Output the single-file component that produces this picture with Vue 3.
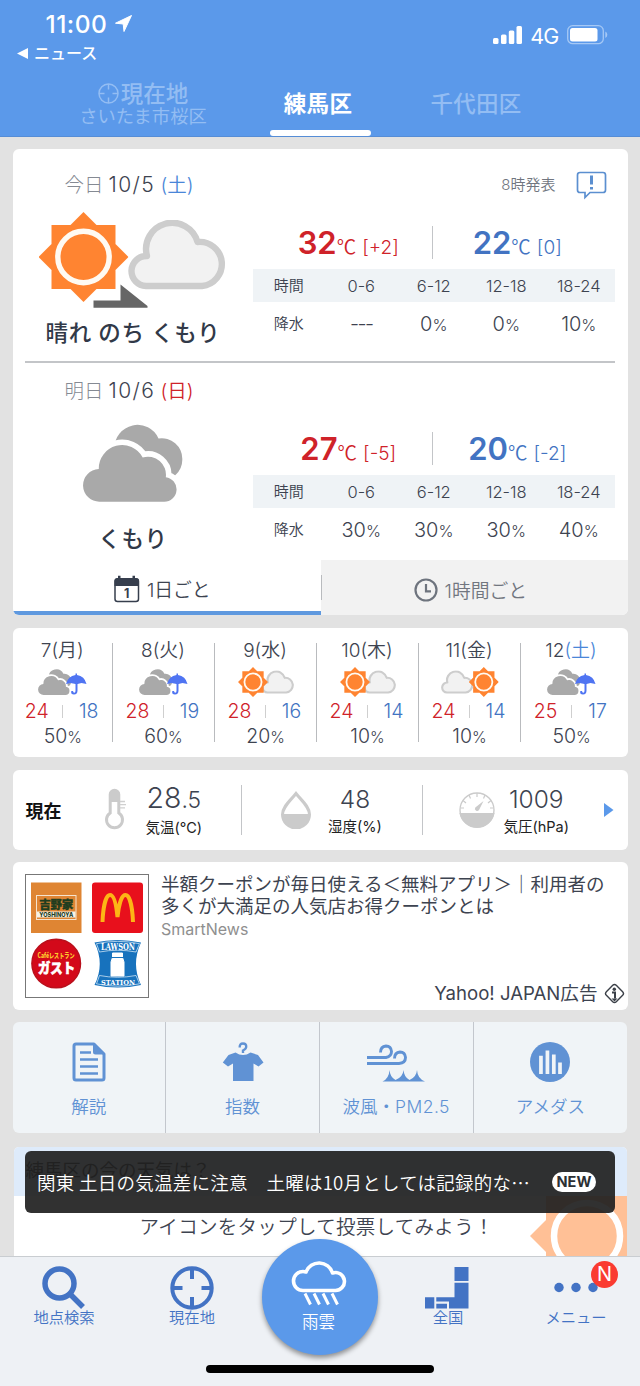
<script setup>
const days = [
  {
    label: '今日', date: '10/5', dow: '(土)', dowClass: 'sat', weather: '晴れ のち くもり', icon: 'sunny',
    hi: 32, hiDiff: '[+2]', lo: 22, loDiff: '[0]', issued: '8時発表',
    rain: ['---', '0', '0', '10'],
  },
  {
    label: '明日', date: '10/6', dow: '(日)', dowClass: 'sun', weather: 'くもり', icon: 'cloudy',
    hi: 27, hiDiff: '[-5]', lo: 20, loDiff: '[-2]', issued: '',
    rain: ['30', '30', '30', '40'],
  },
]
const hours = ['0-6', '6-12', '12-18', '18-24']
const week = [
  { d: 7, w: '(月)', icon: 'rain', hi: 24, lo: 18, p: 50 },
  { d: 8, w: '(火)', icon: 'rain', hi: 28, lo: 19, p: 60 },
  { d: 9, w: '(水)', icon: 'suncloud', hi: 28, lo: 16, p: 20 },
  { d: 10, w: '(木)', icon: 'suncloud', hi: 24, lo: 14, p: 10 },
  { d: 11, w: '(金)', icon: 'cloudsun', hi: 24, lo: 14, p: 10 },
  { d: 12, w: '(土)', icon: 'rain', hi: 25, lo: 17, p: 50, sat: true },
]
</script>

<template>
  <div class="screen">
    <svg class="defs" width="0" height="0">
      <symbol id="i-sun" viewBox="-45 -45 90 90">
        <path d="M-32-32H32V32H-32Z M0-45L45 0L0 45L-45 0Z" fill="#ff8431" />
        <circle r="25.7" fill="none" stroke="#fffaf2" stroke-width="5.4" />
      </symbol>
      <symbol id="i-cloud" viewBox="127 220 101 72">
        <path d="M146 286A15 15 0 0 1 147 256A26 26 0 0 1 197.5 242A22 22 0 0 1 202 286Z" fill="#f2f2f2" stroke="#cdcdcd" stroke-width="6.4" stroke-linejoin="round" />
      </symbol>
      <symbol id="i-dark" viewBox="82 424 101 79">
        <g fill="#a9a9a9">
          <path d="M113.500 448A23 23 0 0 1 157.500 438.500A20.500 20.500 0 0 1 181.300 459A21 21 0 0 1 174 475.500L140 480Z" />
          <path d="M99 501.700A16.300 16.300 0 0 1 97.800 469A23.300 23.300 0 0 1 141.700 457.500A18 18 0 0 1 164.800 477.200A12.300 12.300 0 0 1 163 501.700Z" stroke="#fff" stroke-width="11" />
          <path d="M99 501.700A16.300 16.300 0 0 1 97.800 469A23.300 23.300 0 0 1 141.700 457.500A18 18 0 0 1 164.800 477.200A12.300 12.300 0 0 1 163 501.700Z" />
        </g>
      </symbol>
    </svg>

    <header class="header">
      <div class="status">
        <div class="clock">
          <span>11:00</span>
          <svg width="17" height="17" viewBox="0 0 17 17"><path d="M16.500.5L.5 8.200L8.200 9L9 16.500Z" fill="#fff" stroke="#fff" stroke-linejoin="round" /></svg>
        </div>
        <div class="signal">
          <svg width="29" height="18" viewBox="0 0 29 18" fill="#fff"><rect y="12" width="5.500" height="6" rx="1.500" /><rect x="8" y="8.500" width="5.500" height="9.500" rx="1.500" /><rect x="15.800" y="4.500" width="5.500" height="13.500" rx="1.500" /><rect x="23.500" width="5.500" height="18" rx="1.500" /></svg>
          <span>4G</span>
          <svg width="41" height="20" viewBox="0 0 41 20"><rect x=".7" y=".7" width="35.600" height="18" rx="5" fill="none" stroke="#a5c8f5" stroke-width="1.300" /><rect x="3" y="3" width="27.500" height="13.400" rx="2.500" fill="#fff" /><path d="M38.300 6.500Q40.300 7.500 40.300 9.700T38.300 13Z" fill="#a5c8f5" /></svg>
        </div>
      </div>
      <div class="back">
        <svg width="11" height="11" viewBox="0 0 11 11"><path d="M0 5.500L11 0V11Z" fill="#fff" /></svg>
        <span>ニュース</span>
      </div>
      <nav class="places">
        <div class="place here">
          <div class="here-name">
            <svg width="21" height="21" viewBox="0 0 21 21" fill="none" stroke="#93bdf3" stroke-width="1.500"><circle cx="10.500" cy="10.500" r="9.500" /><path d="M10.500 1V6.500M10.500 14.500V20M1 10.500H6.500M14.500 10.500H20" /></svg>
            <span>現在地</span>
          </div>
          <div class="here-sub">さいたま市桜区</div>
        </div>
        <div class="place active"><span>練馬区</span></div>
        <div class="place other">千代田区</div>
      </nav>
    </header>

    <main class="content">
      <section class="card forecast">
        <article v-for="day in days" :key="day.label" class="day" :class="day.icon">
          <div class="day-head">
            <span class="muted">{{ day.label }}</span>
            <span class="date">{{ day.date }}</span>
            <span class="dow" :class="day.dowClass">{{ day.dow }}</span>
            <template v-if="day.issued">
              <span class="issued">{{ day.issued }}</span>
              <svg class="alert" width="31" height="29" viewBox="0 0 31 29" fill="none" stroke="#5b8fd0"><path d="M4 1.500H27Q29.500 1.500 29.500 4V19Q29.500 21.500 27 21.500H14L9 26.500V21.500H4Q1.500 21.500 1.500 19V4Q1.500 1.500 4 1.500Z" stroke-width="1.700" /><path d="M15.500 4.500V13.500M15.500 16V18.500" stroke-width="3" /></svg>
            </template>
          </div>
          <div class="day-left">
            <svg v-if="day.icon === 'sunny'" width="188" height="96" viewBox="39 212 188 96">
              <use href="#i-sun" x="38.500" y="212" width="90" height="90" />
              <use href="#i-cloud" x="127" y="220" width="101" height="72" />
              <path d="M93.500 300.500H120.500V284.500L147.500 306V307.700H93.500Z" fill="#666" />
            </svg>
            <svg v-else width="101" height="96" viewBox="82 418 101 96">
              <use href="#i-dark" x="82" y="424" width="101" height="79" />
            </svg>
            <div class="weather">{{ day.weather }}</div>
          </div>
          <div class="day-right">
            <div class="temps">
              <div class="temp hi"><b>{{ day.hi }}</b><i>℃</i><span>{{ day.hiDiff }}</span></div>
              <div class="temp lo"><b>{{ day.lo }}</b><i>℃</i><span>{{ day.loDiff }}</span></div>
            </div>
            <div class="row row-head"><span class="th">時間</span><span v-for="h in hours" :key="h">{{ h }}</span></div>
            <div class="row row-rain">
              <span class="th">降水</span>
              <span v-for="(r, i) in day.rain" :key="i" :class="{ none: r === '---' }">{{ r }}<small v-if="r !== '---'">%</small></span>
            </div>
          </div>
        </article>
        <div class="modes">
          <div class="mode on">
            <svg width="26" height="28" viewBox="0 0 26 28"><rect x="1" y="4" width="23.500" height="22.500" rx="2.500" fill="#fff" stroke="#363e4d" stroke-width="1.500" /><path d="M.5 11V6Q.5 3 3.500 3H4V.7H6.500V3H18.500V.7H21V3H22Q25 3 25 6V11Z" fill="#363e4d" /><text x="12.700" y="22.800" text-anchor="middle" font-size="12.500" font-weight="700" fill="#363e4d">1</text></svg>
            <span>1日ごと</span>
          </div>
          <div class="mode off">
            <svg width="24" height="24" viewBox="0 0 24 24" fill="none" stroke="#6e747e" stroke-width="2.200"><circle cx="12" cy="12" r="10.500" /><path d="M12 6V13.300H17" /></svg>
            <span>1時間ごと</span>
          </div>
        </div>
      </section>

      <section class="card week">
        <div v-for="w in week" :key="w.d" class="wday">
          <div class="wdate">{{ w.d }}<span :class="{ sat: w.sat }">{{ w.w }}</span></div>
          <svg width="60" height="34" viewBox="0 0 60 34">
            <template v-if="w.icon === 'rain'">
              <use href="#i-dark" x="5" y="5" width="34" height="26.500" />
              <path d="M33 20Q35 12 42.500 11V9.500H44V11Q51.500 12 53.500 20L48.500 19L44.500 20V26.500Q44.500 30.500 41 30.500T38.300 27H40Q40.200 28.800 41.300 28.800T42.500 27V20L37.500 19Z" fill="#4f74f2" />
            </template>
            <template v-else-if="w.icon === 'suncloud'">
              <use href="#i-cloud" x="25" y="6.500" width="34" height="24" />
              <use href="#i-sun" x="2" y="3" width="30" height="30" />
            </template>
            <template v-else>
              <use href="#i-cloud" x=".5" y="6.500" width="34" height="24" />
              <use href="#i-sun" x="28.800" y="3" width="30" height="30" />
            </template>
          </svg>
          <div class="wtemps"><span class="hi">{{ w.hi }}</span><em></em><span class="lo">{{ w.lo }}</span></div>
          <div class="wpct">{{ w.p }}<small>%</small></div>
        </div>
      </section>

      <section class="card current">
        <div class="now">現在</div>
        <div class="metric m1">
          <svg width="23" height="44" viewBox="0 0 23 44" fill="none"><path d="M6.200 25V6.500A4.300 4.300 0 0 1 14.800 6.500V25A8 8 0 1 1 6.200 25Z" fill="#fff" stroke="#cbcbcb" stroke-width="3" /><path d="M6.200 14V6A4.300 4.300 0 0 1 14.800 6V14Z" fill="#cbcbcb" /><path d="M16 13.500H21M16 16.700H22M16 19.900H21" stroke="#d0d0d0" stroke-width="1.300" /></svg>
          <div class="val"><div class="num big">28<small>.5</small></div><div class="cap">気温(℃)</div></div>
        </div>
        <div class="metric m2">
          <svg width="30" height="38" viewBox="0 0 30 38"><path d="M15 2.500C10 9 1.500 15.500 1.500 23.500A13.500 13.500 0 0 0 28.500 23.500C28.500 15.500 20 9 15 2.500Z" fill="#fff" stroke="#cbcbcb" stroke-width="3" /><path d="M1 23H29A14 14 0 0 1 1 23Z" fill="#cbcbcb" /></svg>
          <div class="val"><div class="num">48</div><div class="cap">湿度(%)</div></div>
        </div>
        <div class="metric m3">
          <svg width="36" height="38" viewBox="0 0 36 38"><circle cx="18" cy="19" r="17" fill="#fff" stroke="#cbcbcb" stroke-width="1.400" /><path d="M.5 22H35.500A17.700 17.700 0 0 1 .5 22Z" fill="#cbcbcb" /><path d="M18 2V6M10 4L11.500 7.500M4 9.500L7 12M26 4L24.500 7.500M32 9.500L29 12M2 17H5M34 17H31" stroke="#cbcbcb" stroke-width="1.200" /><path d="M24.500 10L16.300 16.500A2.200 2.200 0 0 0 20 19Z" fill="#cbcbcb" /></svg>
          <div class="val"><div class="num">1009</div><div class="cap">気圧(hPa)</div></div>
        </div>
        <svg class="more" width="10" height="16" viewBox="0 0 10 16"><path d="M0 1V15L9.500 8Z" fill="#5b99ea" /></svg>
      </section>

      <section class="card ad">
        <div class="thumb">
          <svg width="122" height="122" viewBox="26 876 122 122">
            <rect x="31" y="883.500" width="50.500" height="50.500" fill="#df8533" />
            <rect x="36.500" y="896.500" width="39.500" height="24" fill="none" stroke="#f6e3cd" />
            <rect x="37" y="912.500" width="38.500" height="6" fill="#f6f2e6" />
            <text x="56.300" y="909.800" text-anchor="middle" class="logo-jp" font-size="11.500" fill="#1f3d1f" textLength="34" stroke="#1f3d1f" stroke-width=".4">吉野家</text>
            <text x="56.300" y="917.800" text-anchor="middle" font-size="6.200" font-weight="800" fill="#1f3d1f" textLength="34" lengthAdjust="spacingAndGlyphs">YOSHINOYA</text>
            <rect x="92" y="883.500" width="51" height="50.500" rx="3" fill="#e8101c" />
            <path d="M102.500 923C103 910 105.500 896 110 896S116.500 908 117.500 918C118.500 908 121 896 125.500 896S132.500 910 133 923" fill="none" stroke="#fdb515" stroke-width="4" />
            <circle cx="56.200" cy="964.500" r="24.300" fill="#d3091a" stroke="#b9101c" stroke-width="1.500" />
            <text x="56" y="958.500" text-anchor="middle" class="logo-jp" font-size="7" fill="#ffce2c" textLength="37" lengthAdjust="spacingAndGlyphs">Caféレストラン</text>
            <text x="56.500" y="973.800" text-anchor="middle" class="logo-jp" font-size="14" fill="#fff" textLength="37" lengthAdjust="spacingAndGlyphs" stroke="#fff" stroke-width=".6">ガスト</text>
            <path d="M94.500 943.500Q117.500 938.500 141 943.500Q131 965 141 986Q117.500 991 94.500 986Q105 965 94.500 943.500Z" fill="#1772bd" />
            <path d="M96.500 944.700Q117.500 940 139.500 944.700L136 953Q117.500 949.500 99.500 953ZM99.500 976.500Q117.500 980 136 976.500L139.500 984.800Q117.500 989.500 96.500 984.800Z" fill="#1772bd" stroke="#e7f2fa" stroke-width=".7" />
            <text x="118" y="951" text-anchor="middle" class="slab" font-size="8.500" fill="#fff" textLength="34" lengthAdjust="spacingAndGlyphs">LAWSON</text>
            <text x="118" y="985.600" text-anchor="middle" class="slab" font-size="8" fill="#fff" textLength="34" lengthAdjust="spacingAndGlyphs">STATION</text>
            <path d="M112.500 954H122.500V958.500L124 963V977H111V963L112.500 958.500Z" fill="#fff" stroke="#fff" stroke-linejoin="round" />
            <path d="M112 958.500H123" stroke="#1772bd" />
          </svg>
        </div>
        <div class="ad-body">
          <p class="ad-title">半額クーポンが毎日使える＜無料アプリ＞｜利用者の<br>多くが大満足の人気店お得クーポンとは</p>
          <p class="ad-src">SmartNews</p>
          <div class="ad-by">
            <span>Yahoo! JAPAN広告</span>
            <svg width="21" height="21" viewBox="0 0 21 21"><rect x="3.500" y="3.500" width="14" height="14" rx="2.500" transform="rotate(45 10.500 10.500)" fill="none" stroke="#3b4048" stroke-width="1.400" /><circle cx="10.300" cy="6.200" r="1.700" fill="#3b4048" /><path d="M8 9.500H11V15.500" fill="none" stroke="#3b4048" stroke-width="2" /><path d="M7.500 15.500H13.500L10.500 18.500Z" fill="#3b4048" /></svg>
          </div>
        </div>
      </section>

      <section class="card links">
        <div class="link">
          <svg width="34" height="40" viewBox="0 0 34 40"><path d="M4 2H22L32 12V36Q32 38 30 38H4Q2 38 2 36V4Q2 2 4 2Z" fill="none" stroke="#6092d4" stroke-width="3" stroke-linejoin="round" /><path d="M21 1.500V10Q21 12.500 23.500 12.500H32.500Z" fill="#6092d4" /><path d="M8 10.500H19M8 17.500H26M8 24.500H26M8 31.500H26" stroke="#6092d4" stroke-width="2.700" /></svg>
          <span>解説</span>
        </div>
        <div class="link">
          <svg width="42" height="40" viewBox="0 0 42 40"><path d="M13.500 10.500Q21 15.500 28.500 10.500L36 13L41.500 20.500L36.500 24.500L31.500 21.500V39H11V21.500L6 24.500L.8 20.500L6.500 13Z" fill="#6092d4" /><path d="M17.700 5.500Q17.500 1.500 21 1.500T24.200 5Q24 7 21 8.500V12" fill="none" stroke="#f0f4f7" stroke-width="4.500" /><path d="M17.700 5.500Q17.500 1.500 21 1.500T24.200 5Q24 7 21 8.500V11" fill="none" stroke="#6092d4" stroke-width="2.400" /></svg>
          <span>指数</span>
        </div>
        <div class="link">
          <svg width="60" height="40" viewBox="0 0 60 40"><path d="M1 15.500H20Q25.500 14.500 25.500 9.500Q25 4 20 4Q14.500 4.500 14.500 10.500M1 21.500H33Q39.500 21 39.500 15.500Q39 10 34 10Q28.500 10.500 28.500 16.500" fill="none" stroke="#6092d4" stroke-width="2.900" /><path d="M16.500 39.500Q23 36.500 23.500 28Q24 35 29.500 38Q37 35 37.500 28Q38 35 43.500 38Q50.500 35 51 28Q51.500 36.500 59 39.500Z" fill="#6092d4" /></svg>
          <span>波風・<span class="wide">PM2.5</span></span>
        </div>
        <div class="link">
          <svg width="42" height="42" viewBox="0 0 42 42"><circle cx="21" cy="21" r="21" fill="#6092d4" /><path d="M11.500 14.500V33.500M18.300 9V33.500M25 13V33.500M31.500 21.500V33.500" stroke="#f0f4f7" stroke-width="3.900" /></svg>
          <span>アメダス</span>
        </div>
      </section>

      <section class="card vote">
        <div class="vote-head">練馬区の今の天気は？</div>
        <div class="vote-body">
          <span>アイコンをタップして投票してみよう！</span>
          <svg class="vote-sun" width="97" height="60" viewBox="529 1197 97 60"><path d="M545 1197H630V1278H545ZM529 1237L586 1180L643 1237L586 1294Z" fill="#ffc096" /><circle cx="586" cy="1237" r="33" fill="none" stroke="#fff" stroke-width="6.500" /></svg>
        </div>
      </section>
    </main>

    <div class="toast">
      <span class="toast-text">関東 土日の気温差に注意　土曜は10月としては記録的な…</span>
      <span class="new">NEW</span>
    </div>

    <footer class="tabbar">
      <div class="tab">
        <svg width="44" height="44" viewBox="0 0 44 44" fill="none" stroke="#4373c4"><circle cx="17.500" cy="17.500" r="14.500" stroke-width="5.500" /><path d="M28 28L41 41" stroke-width="5.500" /></svg>
        <span>地点検索</span>
      </div>
      <div class="tab">
        <svg width="44" height="44" viewBox="0 0 44 44" fill="none" stroke="#4373c4" stroke-width="4"><circle cx="22" cy="22" r="19.700" /><path d="M22 2V13M22 31V42M2 22H12.500M31.500 22H42" /></svg>
        <span>現在地</span>
      </div>
      <div class="tab center">
        <div class="rain-button">
          <svg width="56" height="50" viewBox="0 0 56 50" fill="none" stroke="#fff"><path d="M12 31.500A9.500 9.500 0 0 1 12 12.500Q13.500 12.500 15 13A14 14 0 0 1 41.500 14A9 9 0 1 1 44 31.500Z" stroke-width="3.600" stroke-linejoin="round" /><path d="M14 34.500L19.500 45.500M23 34.500L28.500 45.500M32 34.500L37.500 45.500M41 34.500L46.500 45.500" stroke-width="3" /></svg>
          <span>雨雲</span>
        </div>
      </div>
      <div class="tab">
        <svg class="japan" width="44" height="44" viewBox="0 0 44 44" fill="#4373c4"><path d="M29.500 1H43.500V15H29.500ZM29.500 16.800H43.500V42.500H24V35.500H11.300V31.300H29.500ZM0 31.300H9.300V42.500H0ZM11.300 37.800H22V42.500H11.300Z" /></svg>
        <span>全国</span>
      </div>
      <div class="tab">
        <svg width="44" height="44" viewBox="0 0 44 44" fill="#4373c4"><circle cx="5" cy="21.500" r="4.700" /><circle cx="22" cy="21.500" r="4.700" /><circle cx="39" cy="21.500" r="4.700" /></svg>
        <span>メニュー</span>
        <b class="badge">N</b>
      </div>
      <div class="home"></div>
    </footer>
  </div>
</template>

<style>
html, body { margin: 0; background: #e2e2e2; }
</style>

<style scoped>
.screen { position: relative; width: 640px; height: 1386px; overflow: hidden; background: #e2e2e2; color: #3d4350; font-family: Inter, "Noto Sans CJK JP", sans-serif; font-size: 18px; font-weight: 400; white-space: nowrap; }
.screen * { box-sizing: border-box; }
svg { display: block; flex: none; }
.defs { position: absolute; }
p { margin: 0; }
small { font-size: .8em; }

.header { height: 136.500px; background: #5b99ea; border-bottom: 1px solid #568dd6; color: #fff; display: flex; flex-direction: column; }
.status { height: 46px; display: flex; justify-content: space-between; padding: 0 32.500px 0 45.500px; }
.clock { display: flex; align-items: center; gap: 8px; height: 48px; font-size: 24.500px; font-weight: 500; line-height: 48px; letter-spacing: .5px; }
.clock svg { margin-top: -1px; }
.signal { display: flex; align-items: center; height: 70px; font-size: 21.500px; font-weight: 400; gap: 8px; }
.signal span { letter-spacing: -.8px; padding-top: 2px; }
.back { height: 15px; line-height: 15px; display: flex; align-items: center; gap: 6px; padding-left: 17px; font-size: 16px; font-weight: 500; }
.places { flex: 1; display: flex; padding-left: 64px; align-items: flex-end; }
.place { height: 75px; text-align: center; font-size: 22.500px; font-weight: 500; }
.here { width: 158px; color: #93bdf3; padding-top: 21px; }
.here-name { display: flex; justify-content: center; align-items: center; line-height: 23px; gap: 2px; }
.here-sub { font-size: 18.300px; line-height: 23px; font-weight: 400; }
.active { width: 101px; margin-left: 48px; line-height: 23px; padding: 31px 5px 0 0; position: relative; letter-spacing: .3px; font-weight: 600; }
.active::after { content: ""; position: absolute; left: 0; right: 0; bottom: 0; height: 6.500px; border-radius: 3px; background: #fff; }
.other { width: 210px; color: #93bdf3; line-height: 23px; padding-top: 31px; letter-spacing: .3px; }

.content { padding: 12.300px 12.500px 0; display: flex; flex-direction: column; gap: 12.500px; }
.card { background: #fff; border-radius: 6px; overflow: hidden; flex: none; }

.forecast { height: 466.500px; display: flex; flex-direction: column; }
.day { display: grid; grid-template-columns: 240px 362.500px; grid-template-rows: 54px 1fr; }
.day.sunny { height: 214px; padding-top: 8px; position: relative; }
.day.sunny::after { content: ""; position: absolute; left: 12.500px; right: 12.500px; bottom: 0; height: 1.500px; background: #c3c5c8; }
.day.cloudy { height: 197.500px; }
.day-head { grid-column: 1 / 3; display: flex; align-items: center; padding-left: 52px; padding-top: 2.500px; font-size: 19.500px; line-height: 28px; }
.muted { color: #858a93; font-weight: 300; margin-right: 5px; }
.date { font-size: 21px; margin-right: 4px; font-weight: 350; min-width: 48px; letter-spacing: 1.400px; }
.dow { font-weight: 350; }
.sat { color: #4a86d8; }
.sun { color: #cf2229; }
.issued { margin-left: auto; font-size: 15px; font-weight: 350; color: #71767f; margin-right: 20.500px; }
.alert { margin-right: 8px; }
.day-left { display: flex; flex-direction: column; align-items: center; padding-top: 1.500px; padding-left: 1px; }
.weather { font-size: 22.500px; font-weight: 500; line-height: 30px; margin-top: 9.500px; color: #313948; letter-spacing: .6px; }
.temps { height: 58px; display: flex; padding-top: 15.500px; }
.temp { width: 180.500px; height: 33px; display: flex; align-items: baseline; justify-content: center; line-height: 33px; font-weight: 350; }
.temp b { font-size: 31px; font-weight: 600; }
.temp i { font-style: normal; font-weight: 350; font-size: 19.500px; font-family: "Noto Sans CJK JP"; line-height: 24px; }
.temp span { font-size: 19px; margin-left: 6px; }
.temp.hi { padding-left: 12px; border-right: 1.500px solid #c3c5c8; }
.temp.lo { padding-right: 12px; }
.hi { color: #cf2229; }
.lo { color: #4273c2; }
.row { display: grid; grid-template-columns: repeat(5, 72.500px); text-align: center; font-weight: 350; }
.row-head { height: 33.500px; line-height: 34px; background: #eff3f6; font-size: 16.500px; }
.row-rain { height: 43px; line-height: 44px; font-size: 20px; }
.row-rain .none { letter-spacing: -1.500px; }
.row .th { font-size: 15px; }
.row-rain .th { line-height: 43px; }
.modes { flex: 1; display: flex; }
.mode { flex: 1; display: flex; align-items: center; justify-content: center; font-size: 18.800px; font-weight: 350; }
.on { border-bottom: 4.500px solid #5f99df; gap: 7px; padding: 6px 9px 0 0; }
.off { background: #f2f2f2; color: #71767f; gap: 6px; position: relative; padding: 6px 7px 2px 0; }
.off::before { content: ""; position: absolute; left: 0; top: 15px; width: 1px; height: 25px; background: #b9bbbe; }

.week { height: 129.500px; display: grid; grid-template-columns: 99.500px repeat(5, 102px); padding-left: .5px; }
.wday { display: flex; flex-direction: column; align-items: center; position: relative; padding-top: 10px; }
.wday:not(:last-child)::after { content: ""; position: absolute; right: 0; top: 15px; width: 1px; height: 99px; background: #b9bbbe; }
.wdate { line-height: 25px; height: 24px; font-size: 19px; padding-right: 1px; }
.wday svg { margin-top: 2px; }
.wtemps { display: flex; align-items: center; width: 76px; justify-content: space-between; font-size: 19.500px; line-height: 24px; margin-top: 1.500px; }
.wtemps span { width: 24px; text-align: center; }
.wtemps em { width: 1px; height: 13px; background: #cfcfcf; }
.wpct { font-size: 19.500px; line-height: 27px; }
.week .hi, .week .lo, .wpct, .wdate { font-weight: 350; }

.current { height: 80px; display: flex; align-items: center; padding-left: 13px; }
.now { font-weight: 700; font-size: 18px; color: #111; width: 78px; }
.metric { display: flex; align-items: center; height: 50px; }
.metric .val { text-align: center; }
.num { font-size: 24.500px; font-weight: 300; line-height: 28px; padding-top: 3px; }
.num.big { font-size: 28.500px; }
.cap { font-size: 14.500px; line-height: 22px; color: #222; padding-top: 3px; }
.m1 { width: 138.500px; gap: 19px; border-right: 1.500px solid #c3c5c8; }
.m2 { width: 180.500px; padding-left: 39px; gap: 17px; border-right: 1.500px solid #c3c5c8; }
.m3 { width: 181px; padding-left: 36px; gap: 9px; }

.ad { height: 147.500px; display: flex; padding: 12px 0 0 12.500px; }
.thumb { width: 124px; height: 124px; border: 1px solid #777; flex: none; }
.logo-jp { font-family: "Noto Sans CJK JP", sans-serif; font-weight: 900; }
.slab { font-family: "DejaVu Serif", serif; font-weight: 700; }
.ad-body { flex: 1; display: flex; flex-direction: column; padding-left: 12px; min-width: 0; }
.ad-title { font-size: 18.500px; line-height: 22px; margin-top: -1px; }
.ad-src { font-size: 16px; line-height: 22px; color: #8f8f8f; margin-top: 1px; font-weight: 400; }
.ad-by { margin-top: 42px; display: flex; align-items: center; align-self: flex-end; line-height: 22px; font-size: 18.600px; gap: 6px; padding-right: 3px; font-weight: 400; }

.links { height: 111px; background: #f0f4f7; display: grid; grid-template-columns: repeat(4, 153.700px); margin-right: 1px; }
.link { color: #6092d4; border-right: 1.500px solid #c3c7cd; display: flex; flex-direction: column; align-items: center; padding-top: 19.500px; }
.link:last-child { border: 0; }
.link svg { height: 40px; overflow: visible; }
.link > span { font-size: 17.500px; line-height: 24px; margin-top: 13px; font-weight: 350; }
.wide { letter-spacing: .5px; }

.vote { height: 140px; margin: 1px 1px 0; border-radius: 5px; }
.vote-head { height: 49px; background: #deebfb; line-height: 46px; padding-left: 12px; font-size: 18.500px; color: #333; }
.vote-body { height: 91px; position: relative; line-height: 63px; font-size: 19.500px; padding-left: 126px; letter-spacing: .3px; font-weight: 350; }
.vote-sun { position: absolute; right: 0; top: 0; }

.toast { position: absolute; left: 25px; top: 1151px; width: 590px; height: 62px; border-radius: 6px; background: rgba(32, 32, 32, .92); color: #fff; display: flex; align-items: center; padding-left: 12px; font-size: 18.500px; }
.toast-text { font-family: "Noto Sans CJK JP", sans-serif; line-height: 60px; width: 515px; letter-spacing: .25px; font-weight: 350; }
.new { width: 44px; height: 20px; border-radius: 10px; background: #fff; color: #2c2f33; font-size: 14.500px; font-weight: 700; line-height: 20px; text-align: center; }

.tabbar { position: absolute; left: 0; right: 0; bottom: 0; height: 130px; background: #eef1f5; border-top: 1px solid #c9cdd1; display: grid; grid-template-columns: repeat(5, 128px); }
.tab { position: relative; display: flex; flex-direction: column; align-items: center; padding-top: 8.500px; color: #4373c4; }
.tab > span { font-size: 15.300px; line-height: 20px; margin-top: -2px; font-weight: 350; }
.japan { margin-right: 3px; }
.rain-button { position: absolute; left: 6px; top: -18px; width: 116px; height: 116px; border-radius: 50%; background: #5b99ea; color: #fff; box-shadow: 0 3px 5px rgba(0, 0, 0, .4); display: flex; flex-direction: column; align-items: center; padding-top: 20px; font-size: 16.500px; line-height: 26px; padding-right: 3px; font-weight: 350; }
.badge { position: absolute; left: 79px; top: 4px; width: 27px; height: 27px; border-radius: 50%; background: #fa3b31; color: #fff; font-size: 20px; font-weight: 400; line-height: 27px; text-align: center; }
.home { position: absolute; left: 206px; bottom: 13.500px; width: 228px; height: 8px; border-radius: 4px; background: #000; }
</style>
